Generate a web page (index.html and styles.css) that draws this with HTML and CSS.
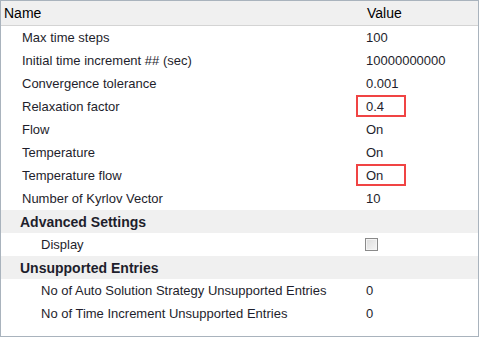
FILE: index.html
```html
<!DOCTYPE html>
<html>
<head>
<meta charset="utf-8">
<link rel="stylesheet" href="styles.css">
</head>
<body>
<div class="grid">
  <div class="head">
    <span class="hname">Name</span>
    <span class="hval">Value</span>
  </div>
  <div class="row"><span class="name">Max time steps</span><span class="val">100</span></div>
  <div class="row"><span class="name">Initial time increment ## (sec)</span><span class="val">10000000000</span></div>
  <div class="row"><span class="name">Convergence tolerance</span><span class="val">0.001</span></div>
  <div class="row"><span class="name">Relaxation factor</span><span class="val boxed">0.4</span></div>
  <div class="row"><span class="name">Flow</span><span class="val">On</span></div>
  <div class="row"><span class="name">Temperature</span><span class="val">On</span></div>
  <div class="row"><span class="name">Temperature flow</span><span class="val boxed">On</span></div>
  <div class="row"><span class="name">Number of Kyrlov Vector</span><span class="val">10</span></div>
  <div class="row group"><span class="gname">Advanced Settings</span></div>
  <div class="row"><span class="name sub">Display</span><span class="val"><span class="check"></span></span></div>
  <div class="row group"><span class="gname">Unsupported Entries</span></div>
  <div class="row"><span class="name sub">No of Auto Solution Strategy Unsupported Entries</span><span class="val">0</span></div>
  <div class="row"><span class="name sub">No of Time Increment Unsupported Entries</span><span class="val">0</span></div>
</div>
</body>
</html>
```
FILE: styles.css
```css
html, body {
  margin: 0;
  padding: 0;
  background: #ffffff;
}
.grid {
  width: 479px;
  height: 337px;
  box-sizing: border-box;
  border: 1px solid #a9b3bd;
  font-family: "Liberation Sans", Arial, sans-serif;
  font-size: 13px;
  color: #1e1e2c;
  display: flex;
  flex-direction: column;
}
.head {
  height: 24px;
  background: #f0f0f0;
  border-bottom: 1px solid #d4d4d4;
  display: flex;
  align-items: center;
  font-size: 14px;
  color: #000;
}
.hname {
  width: 363px;
  padding-left: 3px;
}
.row {
  height: 23px;
  display: flex;
  align-items: center;
  flex-shrink: 0;
}
.name {
  width: 334px;
  padding-left: 21px;
  white-space: nowrap;
}
.name.sub {
  width: 315px;
  padding-left: 40px;
}
.val {
  padding-left: 10px;
  height: 22px;
  display: flex;
  align-items: center;
  box-sizing: border-box;
  width: 50px;
  white-space: nowrap;
}
.val.boxed {
  border: 2px solid #f04444;
  padding-left: 8px;
  margin-top: -1px;
}
.group {
  background: #f0f0f0;
}
.gname {
  padding-left: 19px;
  font-weight: bold;
  font-size: 14px;
}
.check {
  display: inline-block;
  width: 11px;
  height: 11px;
  border: 1px solid #8a8a8a;
  background: linear-gradient(135deg, #dcdcdc, #f6f6f6);
  box-shadow: inset 0 0 0 1px #f4f4f4;
  margin-left: -1px;
}
```
